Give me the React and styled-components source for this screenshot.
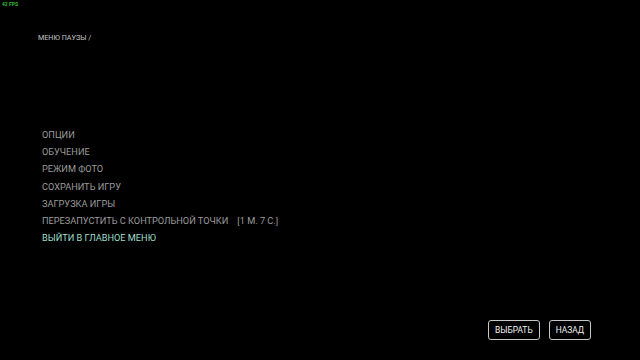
import React from "react";
import styled, { createGlobalStyle } from "styled-components";

const GlobalStyle = createGlobalStyle`
  html, body {
    margin: 0;
    padding: 0;
    background: #000;
  }
  body {
    font-family: Roboto, "Liberation Sans", sans-serif;
  }
`;

const Screen = styled.div`
  width: 640px;
  height: 360px;
  background: #000;
  display: flex;
  flex-direction: column;
  overflow: hidden;
`;

const Fps = styled.div`
  height: 8px;
  padding: 1px 0 0 2px;
  font-size: 5px;
  line-height: 6px;
  font-weight: 700;
  color: #2fbf3a;
`;

const Title = styled.div`
  padding: 24px 0 0 38px;
  font-size: 7.2px;
  line-height: 10px;
  color: #c4c4c4;
`;

const Menu = styled.ul`
  list-style: none;
  margin: 0;
  padding: 86px 0 0 42px;
  display: flex;
  flex-direction: column;
  gap: 5.2px;
`;

const Item = styled.li`
  height: 12px;
  font-size: 9.2px;
  line-height: 12px;
  color: ${(p) => (p.$active ? "#9edfca" : "#9c9c9c")};
  white-space: nowrap;
`;

const Extra = styled.span`
  margin-left: 9px;
`;

const Footer = styled.div`
  margin-top: auto;
  padding: 0 49px 20px 0;
  display: flex;
  justify-content: flex-end;
  gap: 9px;
`;

const Button = styled.button`
  height: 20px;
  padding: 0 6px;
  background: #000;
  border: 1px solid #c8c8c8;
  border-radius: 3px;
  color: #f2f2f2;
  font-family: Roboto, "Liberation Sans", sans-serif;
  font-size: 8.4px;
  box-sizing: border-box;
`;

const items = [
  "ОПЦИИ",
  "ОБУЧЕНИЕ",
  "РЕЖИМ ФОТО",
  "СОХРАНИТЬ ИГРУ",
  "ЗАГРУЗКА ИГРЫ",
];

export default function App() {
  return (
    <Screen>
      <GlobalStyle />
      <Fps>42 FPS</Fps>
      <Title>МЕНЮ ПАУЗЫ /</Title>
      <Menu>
        {items.map((t) => (
          <Item key={t}>{t}</Item>
        ))}
        <Item>
          ПЕРЕЗАПУСТИТЬ С КОНТРОЛЬНОЙ ТОЧКИ<Extra>[1 М. 7 С.]</Extra>
        </Item>
        <Item $active>ВЫЙТИ В ГЛАВНОЕ МЕНЮ</Item>
      </Menu>
      <Footer>
        <Button>ВЫБРАТЬ</Button>
        <Button>НАЗАД</Button>
      </Footer>
    </Screen>
  );
}
